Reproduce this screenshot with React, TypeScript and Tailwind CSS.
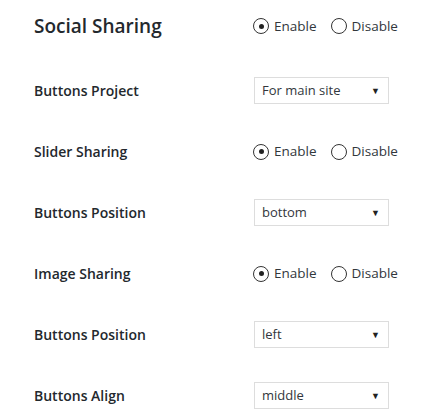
import React from "react";

const font = { fontFamily: '"Open Sans", "Noto Sans", sans-serif' };

function Radio({ checked, label }: { checked: boolean; label: string }) {
  return (
    <span className="flex items-center">
      <span className="flex h-[16px] w-[16px] items-center justify-center rounded-full border border-[#333]">
        {checked && <span className="h-[5px] w-[5px] rounded-full bg-[#222]" />}
      </span>
      <span className="ml-[5px] text-[13.5px] text-[#32373c]">{label}</span>
    </span>
  );
}

function RadioGroup() {
  return (
    <div className="ml-[-1px] flex items-center gap-[14px]">
      <Radio checked label="Enable" />
      <Radio checked={false} label="Disable" />
    </div>
  );
}

function Select({ value }: { value: string }) {
  return (
    <div className="flex h-[27px] w-[135px] items-center justify-between border border-[#dddddd] bg-white pl-[7px] pr-[8px]">
      <span className="text-[13px] text-[#32373c]">{value}</span>
      <span className="text-[9px] text-[#222]">▼</span>
    </div>
  );
}

function Row({ label, children }: { label: string; children: React.ReactNode }) {
  return (
    <div className="flex h-[61px] items-center">
      <div className="w-[220px] text-[14px] font-semibold text-[#23282d]">{label}</div>
      {children}
    </div>
  );
}

export default function App() {
  return (
    <div className="h-[420px] w-[435px] bg-white pl-[34px]" style={font}>
      <div className="flex h-[52px] items-center">
        <div className="w-[220px] text-[19px] font-semibold text-[#23282d]">Social Sharing</div>
        <RadioGroup />
      </div>
      <div className="mt-[8px]">
        <Row label="Buttons Project">
          <Select value="For main site" />
        </Row>
        <Row label="Slider Sharing">
          <RadioGroup />
        </Row>
        <Row label="Buttons Position">
          <Select value="bottom" />
        </Row>
        <Row label="Image Sharing">
          <RadioGroup />
        </Row>
        <Row label="Buttons Position">
          <Select value="left" />
        </Row>
        <Row label="Buttons Align">
          <Select value="middle" />
        </Row>
      </div>
    </div>
  );
}
